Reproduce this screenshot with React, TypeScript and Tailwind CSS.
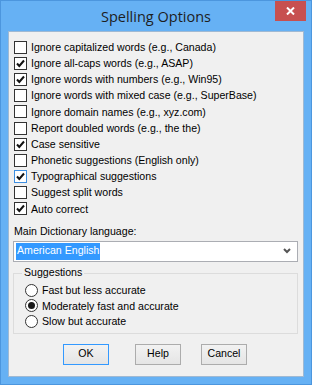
import React from "react";

const checks = [
  { label: "Ignore capitalized words (e.g., Canada)", on: false },
  { label: "Ignore all-caps words (e.g., ASAP)", on: true },
  { label: "Ignore words with numbers (e.g., Win95)", on: true },
  { label: "Ignore words with mixed case (e.g., SuperBase)", on: false },
  { label: "Ignore domain names (e.g., xyz.com)", on: false },
  { label: "Report doubled words (e.g., the the)", on: false },
  { label: "Case sensitive", on: true },
  { label: "Phonetic suggestions (English only)", on: false },
  { label: "Typographical suggestions", on: true, focus: true },
  { label: "Suggest split words", on: false },
  { label: "Auto correct", on: true },
];

const radios = [
  { label: "Fast but less accurate", on: false },
  { label: "Moderately fast and accurate", on: true },
  { label: "Slow but accurate", on: false },
];

function CheckBox({ on, focus }: { on: boolean; focus?: boolean }) {
  return (
    <div
      className={
        focus
          ? "w-[13px] h-[13px] border border-[#3d8ee0] bg-white flex items-center justify-center"
          : "w-[13px] h-[13px] border border-[#333333] bg-white flex items-center justify-center"
      }
    >
      {on && (
        <svg width="11" height="11" viewBox="0 0 11 11">
          <path d="M2 5.5 L4.3 8 L9 2.5" fill="none" stroke="#111" strokeWidth="2" />
        </svg>
      )}
    </div>
  );
}

function Radio({ on }: { on: boolean }) {
  return (
    <div className="w-[13px] h-[13px] rounded-full border border-[#333333] bg-white flex items-center justify-center">
      {on && <div className="w-[7px] h-[7px] rounded-full bg-[#1a1a1a]" />}
    </div>
  );
}

function Btn({ label, primary }: { label: string; primary?: boolean }) {
  return (
    <div
      className={
        primary
          ? "w-[46px] h-[21px] border border-[#3399ff] bg-gradient-to-b from-[#f2f2f2] to-[#e5e5e5] flex items-center justify-center"
          : "w-[46px] h-[21px] border border-[#acacac] bg-gradient-to-b from-[#f2f2f2] to-[#e5e5e5] flex items-center justify-center"
      }
    >
      {label}
    </div>
  );
}

export default function App() {
  return (
    <div
      className="w-[312px] h-[385px] bg-[#66b1f4] border border-[#4c96de] flex flex-col relative overflow-hidden"
      style={{ fontFamily: '"Liberation Sans", Arial, sans-serif' }}
    >
      {/* title bar */}
      <div className="h-[30px] flex items-center justify-center relative">
        <span
          className="text-[14.5px] text-[#1e1e1e] mt-[1px]"
          style={{ fontFamily: '"Open Sans", "Noto Sans", sans-serif' }}
        >
          Spelling Options
        </span>
        <div className="absolute right-[5px] top-0 w-[31px] h-[20px] bg-[#c75050] flex items-center justify-center">
          <svg width="9" height="8" viewBox="0 0 9 8">
            <path d="M1 0.5 L8 7.5 M8 0.5 L1 7.5" stroke="#fff" strokeWidth="2" />
          </svg>
        </div>
      </div>

      {/* client area */}
      <div className="mx-[7px] h-[346px] bg-[#f0f0f0] border border-[#9fb9d3] text-[10.6px] text-black flex flex-col">
        <div className="pt-[7px] pl-[5px] flex flex-col">
          {checks.map((c) => (
            <div key={c.label} className="h-[16.2px] flex items-center gap-[4px]">
              <CheckBox on={c.on} focus={c.focus} />
              <span className="leading-none">{c.label}</span>
            </div>
          ))}
        </div>

        <div className="pl-[5px] mt-[9px] leading-none">Main Dictionary language:</div>

        <div className="ml-[4px] mt-[4px] w-[285px] h-[21px] bg-white border border-[#abadb3] flex items-center pl-[2px] pr-[6px]">
          <span className="bg-[#3399ff] text-white h-[17px] px-[1px] flex items-center">American English</span>
          <div className="flex-1" />
          <svg width="8" height="6" viewBox="0 0 8 6">
            <path d="M1 1 L4 4 L7 1" fill="none" stroke="#555" strokeWidth="2" />
          </svg>
        </div>

        <div className="ml-[4px] mt-[11px] w-[285px] h-[61px] border border-[#dcdcdc] relative flex flex-col pl-[11px] pt-[9px]">
          <span className="absolute left-[8px] top-[-7px] bg-[#f0f0f0] px-[2px] leading-none">Suggestions</span>
          {radios.map((r) => (
            <div key={r.label} className="h-[15.5px] flex items-center gap-[4px]">
              <Radio on={r.on} />
              <span className="leading-none">{r.label}</span>
            </div>
          ))}
        </div>

        <div className="flex mt-[10px] pl-[54px]">
          <Btn label="OK" primary />
          <div className="w-[26px]" />
          <Btn label="Help" />
          <div className="w-[20px]" />
          <Btn label="Cancel" />
        </div>
      </div>
    </div>
  );
}
